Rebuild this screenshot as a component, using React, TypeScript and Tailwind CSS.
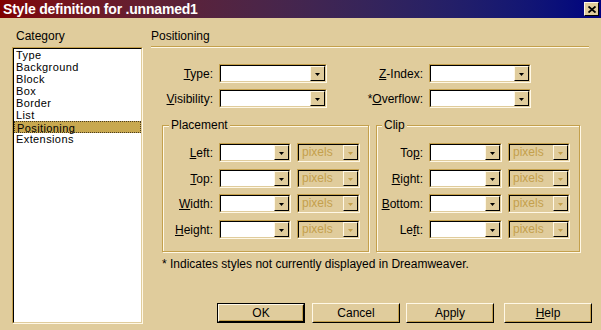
import React from 'react';

const Arrow: React.FC<{ disabled?: boolean }> = ({ disabled }) => (
  <div className="w-[15px] h-full flex items-center justify-center bg-[#e0cc9c] border border-t-[#fff8e6] border-l-[#fff8e6] border-r-black border-b-black">
    <svg width="5" height="3" viewBox="0 0 5 3" className="mt-[1px]">
      <polygon points="0,0 5,0 2.5,3" fill={disabled ? '#c4a04c' : '#000'} />
    </svg>
  </div>
);

const Combo: React.FC<{ className: string; disabled?: boolean }> = ({ className, disabled }) => (
  <div className={`${className} h-[19px] flex border border-t-[#c4a04c] border-l-[#c4a04c] border-r-[#fff8e6] border-b-[#fff8e6]`}>
    <div
      className={`flex flex-1 min-w-0 border border-t-black border-l-black border-r-[#e0cc9c] border-b-[#e0cc9c] ${
        disabled ? 'bg-[#e0cc9c]' : 'bg-white'
      }`}
    >
      <span className="flex-1 pl-[3px] text-[12px] leading-[15px] text-[#c4a04c]">{disabled ? 'pixels' : ''}</span>
      <Arrow disabled={disabled} />
    </div>
  </div>
);

const Btn: React.FC<{ className: string; def?: boolean; children: React.ReactNode }> = ({ className, def, children }) => {
  const raised = (
    <div className="flex flex-1 border border-t-[#fff8e6] border-l-[#fff8e6] border-r-black border-b-black">
      <div className="flex flex-1 items-center justify-center border border-transparent border-r-[#c4a04c] border-b-[#c4a04c] text-[12px] leading-[14px]">
        {children}
      </div>
    </div>
  );
  return def ? (
    <div className={`${className} h-[20px] flex border border-black`}>{raised}</div>
  ) : (
    <div className={`${className} h-[20px] flex`}>{raised}</div>
  );
};

const categories = ['Type', 'Background', 'Block', 'Box', 'Border', 'List', 'Positioning', 'Extensions'];

export default function App() {
  return (
    <div className="w-[601px] h-[330px] overflow-hidden bg-[#e0cc9c] text-black font-['Liberation_Sans',Arial,sans-serif] select-none">
      {/* Title bar */}
      <div className="h-[18px] flex items-center justify-between bg-linear-to-r from-[#800000] to-[#000080] pl-[3px] pr-[2px]">
        <span className="text-white font-bold text-[14px] leading-[16px] tracking-[-0.2px]">Style definition for .unnamed1</span>
        <div className="w-[15px] h-[14px] flex items-center justify-center bg-[#e0cc9c] border border-t-[#fff8e6] border-l-[#fff8e6] border-r-black border-b-black">
          <svg width="8" height="7" viewBox="0 0 8 7">
            <path d="M0.5 0.5 L7.5 6.5 M7.5 0.5 L0.5 6.5" stroke="#000" strokeWidth="1.8" />
          </svg>
        </div>
      </div>

      <div className="flex pt-[11px]">
        {/* Category column */}
        <div className="ml-[12px] w-[131px] flex flex-col">
          <div className="pl-[4px] text-[12px] leading-[14px]">Category</div>
          <div className="mt-[4px] h-[277px] flex border border-t-[#c4a04c] border-l-[#c4a04c] border-r-[#fff8e6] border-b-[#fff8e6]">
            <div className="flex-1 bg-white border border-t-black border-l-black border-r-[#e0cc9c] border-b-[#e0cc9c] flex flex-col">
              {categories.map((c) => (
                <div
                  key={c}
                  className={`h-[12px] pl-[2px] text-[11px] tracking-[0.4px] leading-[12px] ${
                    c === 'Positioning' ? 'bg-[#c8a850] border border-dotted border-[#4a3c20] pl-[1px] leading-[10px]' : ''
                  }`}
                >
                  {c}
                </div>
              ))}
            </div>
          </div>
        </div>

        {/* Positioning panel */}
        <div className="ml-[8px] w-[441px] flex flex-col">
          <div className="text-[12px] leading-[14px]">Positioning</div>
          <div className="mt-[3px] w-[438px] h-[2px] border-t border-t-[#c4a04c] border-b border-b-[#fff8e6]" />

          <div className="mt-[16px] flex items-center">
            <div className="w-[62px] text-right text-[12px] leading-[14px]">
              <span className="underline">T</span>ype:
            </div>
            <Combo className="ml-[6px] w-[108px]" />
            <div className="w-[96px] text-right text-[12px] leading-[14px]">
              <span className="underline">Z</span>-Index:
            </div>
            <Combo className="ml-[6px] w-[102px]" />
          </div>
          <div className="mt-[6px] flex items-center">
            <div className="w-[62px] text-right text-[12px] leading-[14px]">
              <span className="underline">V</span>isibility:
            </div>
            <Combo className="ml-[6px] w-[108px]" />
            <div className="w-[96px] text-right text-[12px] leading-[14px]">
              *<span className="underline">O</span>verflow:
            </div>
            <Combo className="ml-[6px] w-[102px]" />
          </div>

          <div className="mt-[10px] flex items-start">
            <fieldset className="ml-[11px] w-[207px] border border-[#c4a04c] shadow-[inset_1px_1px_0_#fff8e6,1px_1px_0_#fff8e6] pt-[11px] pb-[12px]">
              <legend className="ml-[6px] px-[2px] bg-[#e0cc9c] text-[12px] leading-[14px]">Placement</legend>
              {[
                ['', 'L', 'eft:'],
                ['', 'T', 'op:'],
                ['', 'W', 'idth:'],
                ['', 'H', 'eight:'],
              ].map(([a, u, b], i) => (
                <div key={i} className={`flex items-center ${i === 0 ? '' : i === 2 ? 'mt-[6px]' : 'mt-[7px]'}`}>
                  <div className="w-[50px] text-right text-[12px] leading-[14px]">
                    {a}
                    <span className="underline">{u}</span>
                    {b}
                  </div>
                  <Combo className="ml-[6px] w-[72px]" />
                  <Combo className="ml-[6px] w-[63px]" disabled />
                </div>
              ))}
            </fieldset>

            <fieldset className="ml-[7px] w-[204px] border border-[#c4a04c] shadow-[inset_1px_1px_0_#fff8e6,1px_1px_0_#fff8e6] pt-[11px] pb-[12px]">
              <legend className="ml-[5px] px-[2px] bg-[#e0cc9c] text-[12px] leading-[14px]">Clip</legend>
              {[
                ['To', 'p', ':'],
                ['', 'R', 'ight:'],
                ['', 'B', 'ottom:'],
                ['Le', 'f', 't:'],
              ].map(([a, u, b], i) => (
                <div key={i} className={`flex items-center ${i === 0 ? '' : i === 2 ? 'mt-[6px]' : 'mt-[7px]'}`}>
                  <div className="w-[46px] text-right text-[12px] leading-[14px]">
                    {a}
                    <span className="underline">{u}</span>
                    {b}
                  </div>
                  <Combo className="ml-[6px] w-[73px]" />
                  <Combo className="ml-[6px] w-[62px]" disabled />
                </div>
              ))}
            </fieldset>
          </div>

          <div className="mt-[5px] ml-[11px] text-[12px] leading-[14px]">* Indicates styles not currently displayed in Dreamweaver.</div>

          <div className="mt-[32px] flex">
            <Btn className="ml-[66px] w-[88px]" def>
              OK
            </Btn>
            <Btn className="ml-[7px] w-[88px]">Cancel</Btn>
            <Btn className="ml-[6px] w-[88px]">Apply</Btn>
            <Btn className="ml-[10px] w-[88px]">
              <span className="underline">H</span>elp
            </Btn>
          </div>
        </div>
      </div>
    </div>
  );
}
